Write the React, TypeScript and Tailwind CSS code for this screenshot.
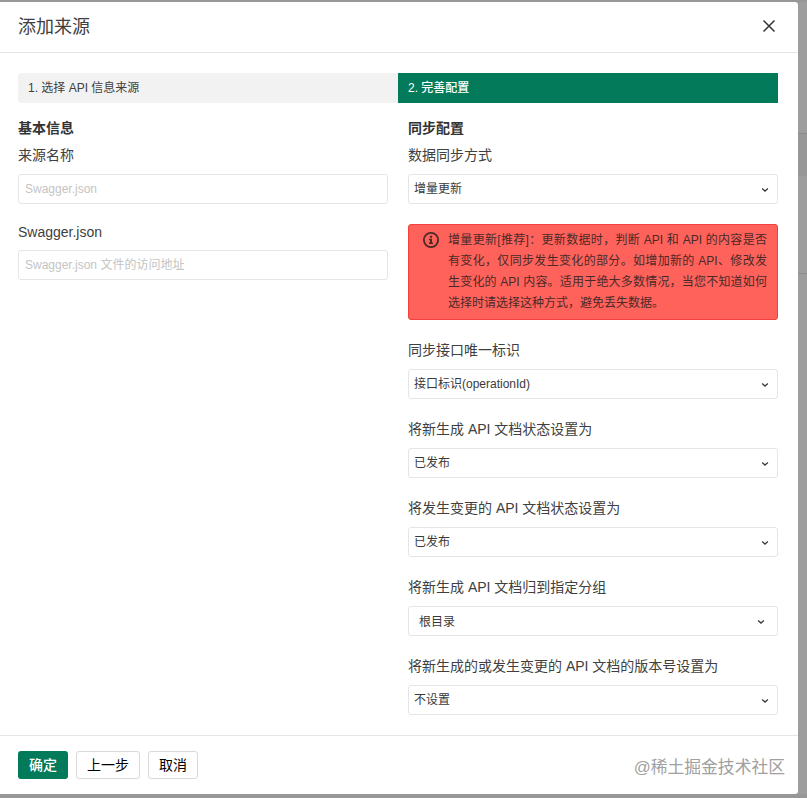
import React from 'react';

const STATUS_FIELDS = [
  { label: '同步接口唯一标识', value: '接口标识(operationId)' },
  { label: '将新生成 API 文档状态设置为', value: '已发布' },
  { label: '将发生变更的 API 文档状态设置为', value: '已发布' },
  { label: '将新生成 API 文档归到指定分组', value: '根目录', inset: true },
  { label: '将新生成的或发生变更的 API 文档的版本号设置为', value: '不设置' },
];

const HINT_LINES = [
  '增量更新[推荐]：更新数据时，判断 API 和 API 的内容是否',
  '有变化，仅同步发生变化的部分。如增加新的 API、修改发',
  '生变化的 API 内容。适用于绝大多数情况，当您不知道如何',
];

const FieldLabel = ({ children }: { children: React.ReactNode }) => (
  <label className="block h-5 whitespace-nowrap text-sm leading-5 text-[#404040]">{children}</label>
);

const SelectBox = ({ value, inset = false }: { value: string; inset?: boolean }) => (
  <button
    className={`mt-[9px] flex h-[30px] w-full items-center justify-between rounded-[3px] border border-[#e5e5e5] bg-white text-xs text-[#3a3a3a] ${
      inset ? 'pl-[10px] pr-3 pt-px' : 'pl-[5px] pr-2'
    }`}
  >
    <span className="leading-[18px]">{value}</span>
    <svg className="mt-px h-2 w-2" viewBox="0 0 8 8" fill="none" stroke="currentColor" strokeWidth="1.3">
      <path d="M1.1 2.6L4 5.1l2.9-2.5" />
    </svg>
  </button>
);

const TextField = ({ placeholder }: { placeholder: string }) => (
  <input
    className="block h-[30px] w-full rounded-[3px] border border-[#e5e5e5] px-1.5 text-xs text-[#333] outline-none placeholder:text-[#c4c4c4]"
    placeholder={placeholder}
  />
);

const SyncHint = () => (
  <div className="mt-5 flex h-24 rounded-[3px] border border-[#f5403c] bg-[#ff625b] py-[5px] pl-[14px] pr-[10px] text-[#4a2a28]">
    <svg className="mt-[2px] h-4 w-4 shrink-0" viewBox="0 0 16 16" fill="none">
      <circle cx="8" cy="8" r="7.1" stroke="currentColor" strokeWidth="1.8" />
      <path d="M6.9 3.7h2.2v2H6.9zM6 6.8h3v3.8h1v1.5H6v-1.5h1V8.3H6z" fill="currentColor" />
    </svg>
    <div className="ml-[9px] flex-1 text-xs leading-[21px]">
      {HINT_LINES.map(line => (
        <p key={line} className="whitespace-nowrap text-justify [text-align-last:justify]">{line}</p>
      ))}
      <p>选择时请选择这种方式，避免丢失数据。</p>
    </div>
  </div>
);

const App = () => {
  return (
    <div className="relative flex h-[798px] w-[807px] overflow-hidden bg-[#979797] pb-1 pt-0.5 font-['Liberation_Sans','Noto_Sans_CJK_SC',sans-serif]">
      <main className="flex w-[798px] shrink-0 flex-col rounded-r-[3px] bg-white">
        <header className="flex h-[51px] shrink-0 items-center justify-between border-b border-[#e5e5e5] pl-[18px] pr-[23px]">
          <h1 className="text-lg leading-6 text-[#404040]">添加来源</h1>
          <button aria-label="关闭" className="mb-0.5 text-[#333]">
            <svg className="h-3 w-3" viewBox="0 0 12 12" fill="none" stroke="currentColor" strokeWidth="1.5">
              <path d="M.5.5l11 11M11.5.5l-11 11" />
            </svg>
          </button>
        </header>

        <div className="flex-1 px-[18px] pt-5">
          {/* Steps */}
          <div className="flex h-[30px] w-[760px] text-xs leading-[30px]">
            <div className="w-[380px] rounded-l-[3px] bg-[#f2f2f2] pl-[10px] text-[#404040]">1. 选择 API 信息来源</div>
            <div className="w-[380px] bg-[#037b5b] pl-[10px] font-medium text-white">2. 完善配置</div>
          </div>

          <div className="flex w-[760px] gap-5 pt-[15px]">
            <section className="w-[370px]">
              <h2 className="mb-[7px] text-sm font-bold leading-5 text-[#333]">基本信息</h2>
              <FieldLabel>来源名称</FieldLabel>
              <div className="mb-[18px] mt-[9px]">
                <TextField placeholder="Swagger.json" />
              </div>
              <FieldLabel>Swagger.json</FieldLabel>
              <div className="mt-2">
                <TextField placeholder="Swagger.json 文件的访问地址" />
              </div>
            </section>

            <section className="w-[370px]">
              <h2 className="mb-[7px] text-sm font-bold leading-5 text-[#333]">同步配置</h2>
              <FieldLabel>数据同步方式</FieldLabel>
              <SelectBox value="增量更新" />
              <SyncHint />
              {STATUS_FIELDS.map(field => (
                <div key={field.label} className="mt-5">
                  <FieldLabel>{field.label}</FieldLabel>
                  <SelectBox value={field.value} inset={field.inset} />
                </div>
              ))}
            </section>
          </div>
        </div>

        <footer className="flex h-[59px] shrink-0 items-start justify-between border-t border-[#e5e5e5] pl-[18px] pr-[13px] pt-[15px]">
          <div className="flex gap-2 text-sm">
            <button className="h-7 w-[50px] rounded-[3px] bg-[#037b5b] font-medium text-white">确定</button>
            <button className="h-7 w-16 rounded-[3px] border border-[#d9d9d9] text-black">上一步</button>
            <button className="h-7 w-[50px] rounded-[3px] border border-[#d9d9d9] text-black">取消</button>
          </div>
          <span className="mt-0.5 whitespace-nowrap text-[16.8px] leading-[30px] text-[#a0a0a0]">@稀土掘金技术社区</span>
        </footer>
      </main>

      {/* Dimmed page behind the drawer */}
      <aside className="flex flex-1 flex-col bg-[#9d9d9d]">
        <div className="h-[132px] border-b border-[#8c8c8c]" />
        <div className="h-[42px] bg-[#979797]" />
        <div className="h-[98px] border-b border-[#8c8c8c]" />
      </aside>
    </div>
  );
};

export default App;
